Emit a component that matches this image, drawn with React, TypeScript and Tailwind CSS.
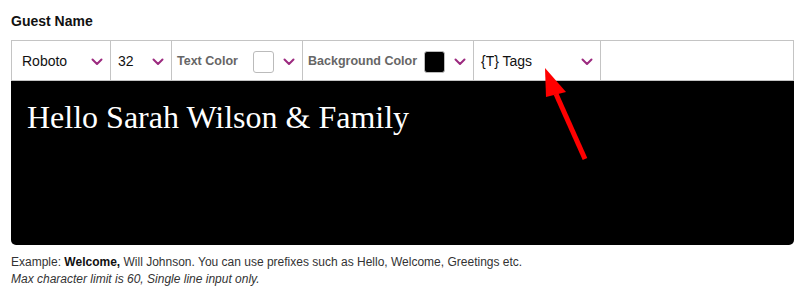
import React from 'react';

const Chevron: React.FC = () => (
  <svg width="12" height="8" viewBox="0 0 12 8" className="shrink-0">
    <path d="M1.5 1.5 L6 6 L10.5 1.5" fill="none" stroke="#9c2a7f" strokeWidth="2" strokeLinecap="round" strokeLinejoin="round" />
  </svg>
);

export default function App() {
  return (
    <div className="relative w-[807px] h-[306px] bg-white pl-[11px] pr-[13px] pt-[11px] font-['Liberation_Sans',Arial,sans-serif]">
      <div className="text-[14px] leading-[20px] font-bold text-[#111]">Guest Name</div>

      <div className="mt-[9px] flex h-[41px] border border-[#c4c4c4] pt-[2px]">
        {/* font */}
        <div className="flex w-[99px] items-center justify-between border-r border-[#c4c4c4] -mt-[2px] pt-[2px] pl-[10px] pr-[7px] text-[14px] text-[#111]">
          <span>Roboto</span>
          <Chevron />
        </div>
        {/* size */}
        <div className="flex w-[61px] items-center justify-between border-r border-[#c4c4c4] -mt-[2px] pt-[2px] pl-[7px] pr-[7px] text-[14px] text-[#111]">
          <span>32</span>
          <Chevron />
        </div>
        {/* text colour */}
        <div className="flex w-[131px] items-center border-r border-[#c4c4c4] -mt-[2px] pt-[2px] pl-[5px] pr-[7px]">
          <span className="text-[12.5px] font-bold text-[#666]">Text Color</span>
          <span className="ml-auto mr-[9px] h-[22px] w-[21px] rounded-[3px] border border-[#bbb] bg-white" />
          <Chevron />
        </div>
        {/* background colour */}
        <div className="flex w-[171px] items-center border-r border-[#c4c4c4] -mt-[2px] pt-[2px] pl-[5px] pr-[7px]">
          <span className="text-[12.5px] font-bold text-[#666]">Background Color</span>
          <span className="ml-auto mr-[9px] h-[22px] w-[21px] rounded-[3px] border border-[#bbb] bg-black" />
          <Chevron />
        </div>
        {/* tags */}
        <div className="flex w-[127px] items-center justify-between border-r border-[#c4c4c4] -mt-[2px] pt-[2px] pl-[7px] pr-[7px] text-[14px] text-[#111]">
          <span>{'{T} Tags'}</span>
          <Chevron />
        </div>
        <div className="flex-1" />
      </div>

      <div className="h-[164px] rounded-b-[5px] bg-black px-[16px] pt-[16px]">
        <div className="font-['Liberation_Serif','Times_New_Roman',serif] text-[32px] leading-[40px] text-white">
          Hello Sarah Wilson &amp; Family
        </div>
      </div>

      <div className="mt-[9px] text-[12px] leading-[17px] text-[#333]">
        <p>
          Example: <b className="text-[#111]">Welcome,</b> Will Johnson. You can use prefixes such as Hello, Welcome, Greetings etc.
        </p>
        <p className="italic">Max character limit is 60, Single line input only.</p>
      </div>

      {/* annotation arrow */}
      <svg className="pointer-events-none absolute left-[530px] top-[62px]" width="70" height="104" viewBox="0 0 70 104">
        <line x1="55" y1="97" x2="26" y2="32" stroke="#f00" strokeWidth="5" strokeLinecap="butt" />
        <polygon points="15,6 36,30 16,35" fill="#f00" />
      </svg>
    </div>
  );
}
